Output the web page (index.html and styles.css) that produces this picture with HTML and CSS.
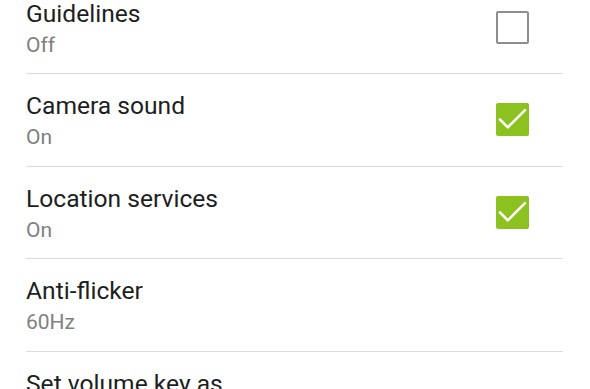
FILE: index.html
```html
<!DOCTYPE html>
<html>
<head>
<meta charset="utf-8">
<link rel="stylesheet" href="styles.css">
</head>
<body>
<div class="list">
  <div class="row">
    <div class="text">
      <div class="title">Guidelines</div>
      <div class="sub">Off</div>
    </div>
    <div class="check"></div>
  </div>
  <div class="row">
    <div class="text">
      <div class="title">Camera sound</div>
      <div class="sub">On</div>
    </div>
    <div class="check on">
      <svg viewBox="0 0 33 33" width="33" height="33"><path d="M4 16.5 L11.8 24.3 L29 7.2" fill="none" stroke="#fff" stroke-width="2.6" stroke-linecap="round" stroke-linejoin="round"/></svg>
    </div>
  </div>
  <div class="row">
    <div class="text">
      <div class="title">Location services</div>
      <div class="sub">On</div>
    </div>
    <div class="check on">
      <svg viewBox="0 0 33 33" width="33" height="33"><path d="M4 16.5 L11.8 24.3 L29 7.2" fill="none" stroke="#fff" stroke-width="2.6" stroke-linecap="round" stroke-linejoin="round"/></svg>
    </div>
  </div>
  <div class="row">
    <div class="text">
      <div class="title">Anti-flicker</div>
      <div class="sub">60Hz</div>
    </div>
  </div>
  <div class="row">
    <div class="text">
      <div class="title">Set volume key as</div>
    </div>
  </div>
</div>
</body>
</html>
```

FILE: styles.css
```css
html, body {
  margin: 0;
  padding: 0;
  background: #fff;
  overflow: hidden;
}
body {
  font-family: Roboto, "Noto Sans", sans-serif;
}
.list {
  margin: -19.5px 27px 0 26px;
}
.row {
  display: flex;
  align-items: center;
  height: 92.5px;
  box-sizing: border-box;
  border-top: 1px solid #dcdcdc;
  padding-right: 34px;
}
.text {
  align-self: flex-start;
  margin-top: 18px;
  flex: 1;
}
.title {
  font-size: 24.6px;
  line-height: 28px;
  color: #1e1e1e;
}
.sub {
  font-size: 21px;
  line-height: 28px;
  margin-top: 3px;
  color: #808080;
}
.check {
  width: 33px;
  height: 33px;
  box-sizing: border-box;
  border: 2px solid #8e8e8e;
  border-radius: 2px;
  flex: none;
}
.check.on {
  border: none;
  background: #8cc21f;
}
.check svg {
  display: block;
}
```
